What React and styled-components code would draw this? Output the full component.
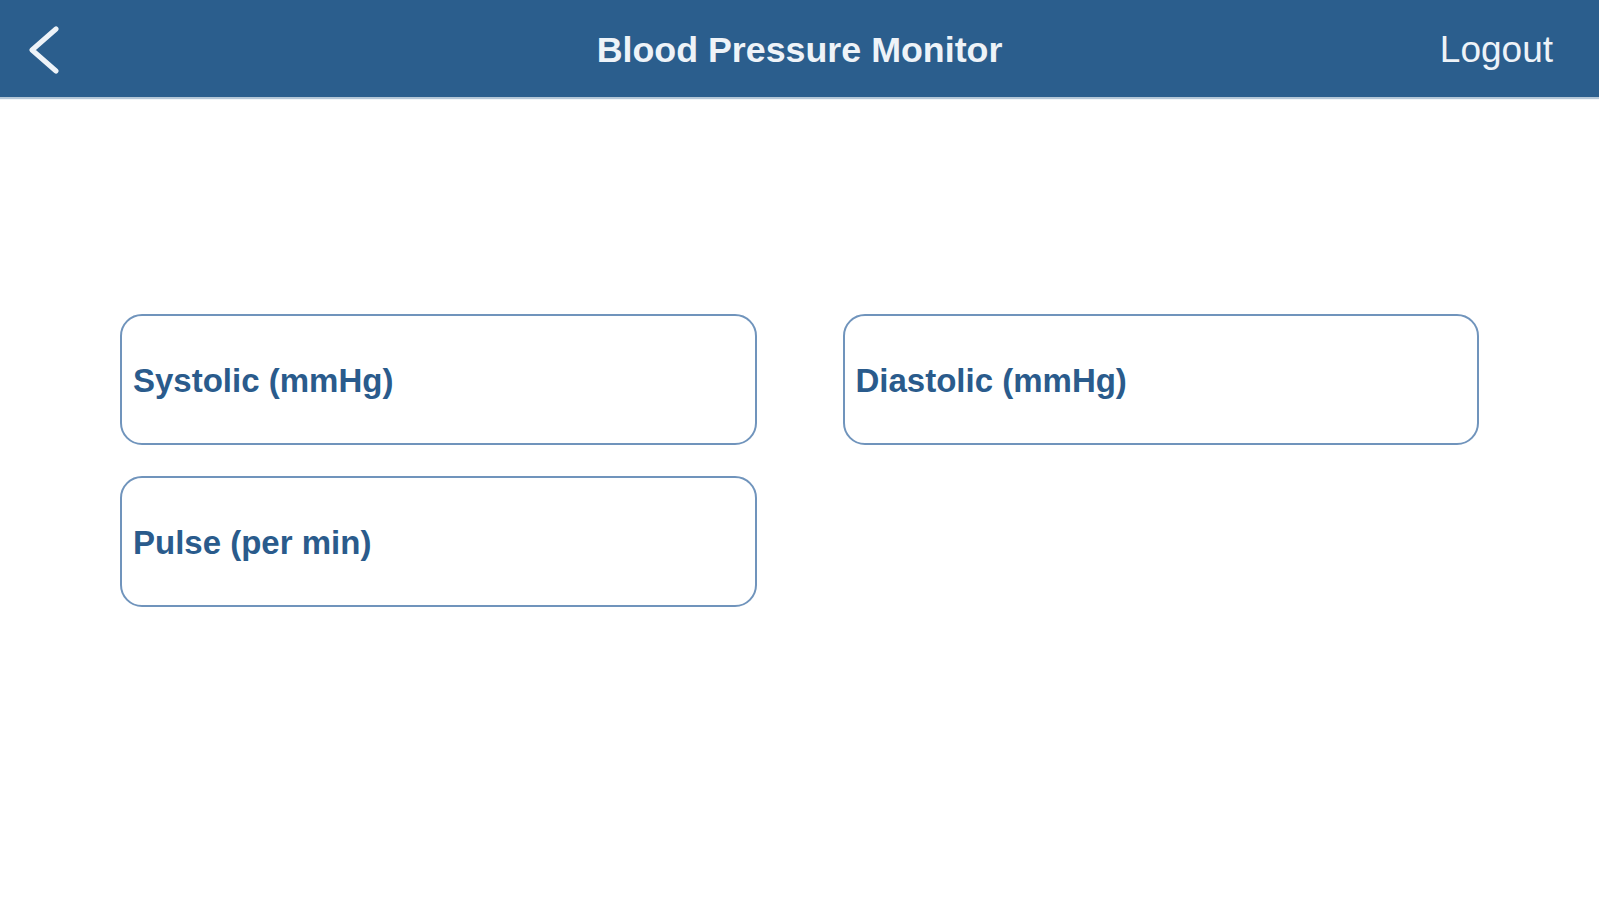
import React from 'react';
import styled, { createGlobalStyle } from 'styled-components';

const GlobalStyle = createGlobalStyle`
  html, body {
    margin: 0;
    padding: 0;
    background: #ffffff;
    font-family: "Liberation Sans", Arial, Helvetica, sans-serif;
  }
`;

const Page = styled.div`
  min-height: 100vh;
  background: #ffffff;
`;

const NavBar = styled.header`
  height: 97px;
  background-color: #2b5e8d;
  box-shadow: 0 2px 1px rgba(43, 94, 141, 0.35);
  display: grid;
  grid-template-columns: 1fr auto 1fr;
  align-items: center;
  padding: 3px 46px 0;
  box-sizing: border-box;
  color: #eef3f8;
`;

const BackButton = styled.button`
  justify-self: start;
  margin-left: -18px;
  background: transparent;
  border: 0;
  padding: 0;
  display: flex;
  align-items: center;
  cursor: pointer;
  color: inherit;
`;

const Title = styled.h1`
  margin: 0;
  font-size: 35.8px;
  font-weight: 700;
  color: inherit;
`;

const LogoutLink = styled.a`
  justify-self: end;
  font-size: 37px;
  color: inherit;
  text-decoration: none;
  cursor: pointer;
`;

const FieldGrid = styled.div`
  display: grid;
  grid-template-columns: 1fr 1fr;
  column-gap: 86px;
  row-gap: 31px;
  padding: 217px 120px 0;
`;

const Field = styled.div`
  height: 131px;
  box-sizing: border-box;
  border: 2.5px solid #7094bc;
  border-radius: 22px;
  display: flex;
  align-items: center;
  padding: 3px 0 0 11px;
  font-size: 33px;
  font-weight: 700;
  color: #2a5b8c;
`;

function ChevronLeft() {
  return (
    <svg width="32" height="48" viewBox="0 0 32 48" fill="none">
      <path
        d="M28 3 L4 24 L28 45"
        stroke="currentColor"
        strokeWidth="5"
        strokeLinecap="round"
        strokeLinejoin="round"
      />
    </svg>
  );
}

const fields = ['Systolic (mmHg)', 'Diastolic (mmHg)', 'Pulse (per min)'];

export default function App() {
  return (
    <Page>
      <GlobalStyle />
      <NavBar>
        <BackButton aria-label="Back">
          <ChevronLeft />
        </BackButton>
        <Title>Blood Pressure Monitor</Title>
        <LogoutLink>Logout</LogoutLink>
      </NavBar>
      <FieldGrid>
        {fields.map((label) => (
          <Field key={label}>{label}</Field>
        ))}
      </FieldGrid>
    </Page>
  );
}
